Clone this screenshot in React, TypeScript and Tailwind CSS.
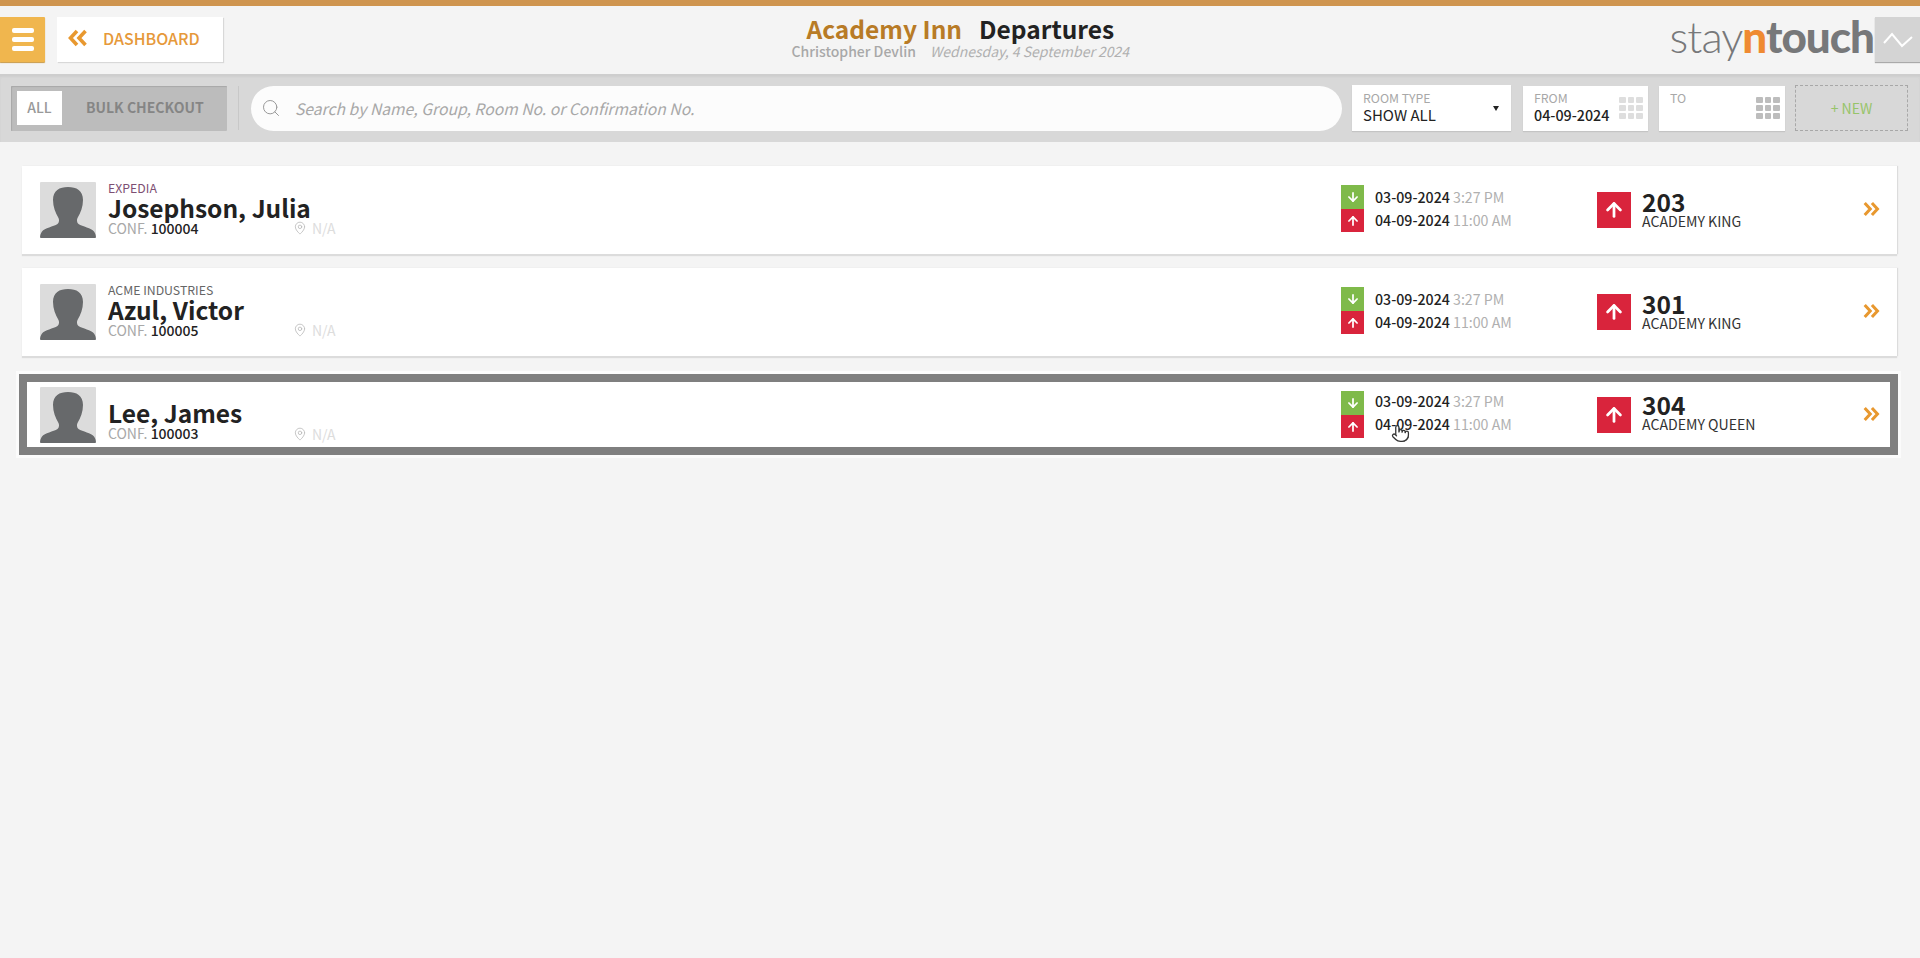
import { ArrowDown, ArrowUp, MapPin, Pointer, Search } from "lucide-react"

const guests = [
  { group: "EXPEDIA", groupColor: "text-[#7d4f73]", name: "Josephson, Julia", conf: "100004", room: "203", roomType: "ACADEMY KING" },
  { group: "ACME INDUSTRIES", groupColor: "text-[#666666]", name: "Azul, Victor", conf: "100005", room: "301", roomType: "ACADEMY KING" },
  { group: "", groupColor: "", name: "Lee, James", conf: "100003", room: "304", roomType: "ACADEMY QUEEN", active: true },
]

function DoubleChevron({ className }: { className: string }) {
  return (
    <svg viewBox="0 0 20 18" className={className} fill="none" stroke="currentColor" strokeWidth="3.6">
      <path d="M2 2l6.5 7L2 16" />
      <path d="M10.5 2l6.5 7-6.5 7" />
    </svg>
  )
}

function Silhouette() {
  return (
    <div className="w-14 h-14 bg-[#dcdcdc] shrink-0 overflow-hidden rounded-[1px]">
      <svg viewBox="0 0 56 56" className="w-14 h-14" fill="#67696b">
        <path d="M28 5c8.500 0 15 3.500 15 13 0 7-2.500 13-5.500 18-1 2-.5 5 1 6 4 2.500 13 4 15.500 7.500 1.500 2 2 4 2 7H0c0-3 .5-5 2-7 2.500-3.500 11.500-5 15.500-7.500 1.500-1 2-4 1-6-3-5-5.500-11-5.500-18C13 8.500 19.500 5 28 5z" />
      </svg>
    </div>
  )
}

function CalendarGrid({ className }: { className: string }) {
  return (
    <div className="grid grid-cols-3 gap-[2px] w-[24px]">
      {Array.from({ length: 9 }).map((_, i) => (
        <span key={i} className={`h-[6px] rounded-[1px] ${className}`} />
      ))}
    </div>
  )
}

function GuestRow({ guest }: { guest: (typeof guests)[number] }) {
  return (
    <div
      className={
        guest.active
          ? "h-[81px] -ml-[3px] -mr-[1px] mt-[18px] border-[8px] border-[#7f7f7f] bg-white flex items-center pl-[13px] pr-[10px] shadow-[0_0_0_3px_#fbfbfb]"
          : "h-[88px] mb-[14px] bg-white flex items-center pl-[18px] pr-[17px] shadow-[0_2px_1px_#dcdcdc,1px_0_1px_#dcdcdc]"
      }
    >
      <Silhouette />
      <div className={`ml-3 w-[185px] shrink-0 ${guest.active ? "pt-[11px]" : "pb-[5px]"}`}>
        {guest.group && <div className={`text-[12.300px] leading-[14px] ${guest.groupColor}`}>{guest.group}</div>}
        <div className="text-[24.500px] leading-[26px] font-semibold text-[#222222] whitespace-nowrap">{guest.name}</div>
        <div className="text-[14px] leading-[14px] text-[#a8a8a8] whitespace-nowrap">
          CONF. <span className="font-medium text-[#222222]">{guest.conf}</span>
        </div>
      </div>
      <div className={`flex items-center text-[#c4c4c4] self-end ${guest.active ? "mb-[6px]" : "mb-[19px]"}`}>
        <MapPin size={14} strokeWidth={1.3} className="text-[#b5b5b5]" />
        <span className="ml-[5px] text-[14px] leading-[14px] text-[#dddddd]">N/A</span>
      </div>
      <div className="flex-1" />
      <div className="w-[256px] flex items-center">
        <div className={`flex flex-col w-[23px] ${guest.active ? "" : "-mt-[3px]"}`}>
          <div className="h-[24px] bg-[#7fba4a] flex items-center justify-center">
            <ArrowDown size={14} strokeWidth={3} className="text-white" />
          </div>
          <div className="h-[23px] bg-[#d9243c] flex items-center justify-center">
            <ArrowUp size={14} strokeWidth={3} className="text-white" />
          </div>
        </div>
        <div className={`ml-[11px] text-[14.200px] leading-[23px] whitespace-nowrap ${guest.active ? "-mt-[3px]" : "-mt-[2px]"}`}>
          <div>
            <span className="font-medium text-[#222222]">03-09-2024</span>{" "}
            <span className="text-[#b0b0b0]">3:27 PM</span>
          </div>
          <div>
            <span className="font-medium text-[#222222]">04-09-2024</span>{" "}
            <span className="text-[#b0b0b0]">11:00 AM</span>
          </div>
        </div>
      </div>
      <div className="w-[34px] h-[36px] bg-[#d9243c] flex items-center justify-center shrink-0">
        <ArrowUp size={22} strokeWidth={3} className="text-white" />
      </div>
      <div className={`ml-[11px] w-[221px] ${guest.active ? "-mt-[5px]" : "-mt-[3px]"}`}>
        <div className="text-[24.500px] leading-[25px] font-semibold text-[#222222]">{guest.room}</div>
        <div className="text-[14.100px] leading-[15px] text-[#333333] whitespace-nowrap">{guest.roomType}</div>
      </div>
      <DoubleChevron className="w-[17px] h-[16px] -mt-[2px] text-[#e8982f]" />
    </div>
  )
}

export default function App() {
  return (
    <div className="relative min-h-[958px] bg-[#f4f4f4] font-['Noto_Sans_CJK_SC',sans-serif] overflow-hidden">
      <div className="h-[6px] bg-[#cf954f]" />

      {/* header */}
      <div className="h-[68px] flex items-start pt-[11px] relative">
        <div className="w-[45px] h-[45px] bg-[#f0b64e] rounded-r-[1px] flex flex-col items-center justify-center gap-[4px] shadow-[0_1px_1px_#c99a45]">
          <span className="w-[22px] h-[5px] rounded-[2px] bg-white" />
          <span className="w-[22px] h-[5px] rounded-[2px] bg-white" />
          <span className="w-[22px] h-[5px] rounded-[2px] bg-white" />
        </div>
        <div className="ml-3 w-[166px] h-[45px] bg-white flex items-center pl-[10px] pb-[3px] shadow-[1px_1px_1px_#d8d8d8]">
          <div className="rotate-180">
            <DoubleChevron className="w-[21px] h-[18px] text-[#e8982f]" />
          </div>
          <span className="ml-[15px] text-[16px] font-medium text-[#e6993a]">DASHBOARD</span>
        </div>
        <div className="flex-1 flex flex-col items-center -mt-[3px] pl-[28px]">
          <div className="text-[24.500px] leading-[30px] font-semibold whitespace-nowrap">
            <span className="text-[#b87b26]">Academy Inn</span>
            <span className="ml-[17px] text-[#222222]">Departures</span>
          </div>
          <div className="text-[14px] leading-[18px] whitespace-nowrap -mt-[2px]">
            <span className="font-medium text-[#a8a8a8]">Christopher Devlin</span>
            <span className="ml-[14px] italic text-[#b0b0b0]">Wednesday, 4 September 2024</span>
          </div>
        </div>
        <div className="flex items-start">
          <div className="text-[44px] leading-[44px] font-['Lato',sans-serif] tracking-[-1px] whitespace-nowrap text-[#77787a] -mt-[3px]">
            <span className="font-light">stay</span>
            <span className="font-black text-[#ef8a32]">n</span>
            <span className="font-black">touch</span>
          </div>
          <div className="w-[45px] h-[45px] ml-[1px] bg-[#d4d4d4] flex items-center justify-center shadow-[0_1px_1px_#aaaaaa]">
            <svg viewBox="0 0 30 18" className="w-[30px] h-[18px]" fill="none" stroke="white" strokeWidth="2">
              <path d="M1 12l8-9 10 12 10-9" />
            </svg>
          </div>
        </div>
      </div>

      {/* filter bar */}
      <div className="h-[68px] bg-[#d8d8d8] shadow-[inset_0_3px_2px_#cecece] flex items-center pl-[11px] pr-[12px]">
        <div className="w-[216px] h-[45px] bg-[#bcbcbc] flex items-center pl-[6px] shrink-0 rounded-[1px] shadow-[inset_1px_1px_1px_#a8a8a8]">
          <div className="w-[45px] h-[34px] bg-white flex items-center justify-center pb-[2px] text-[14px] font-medium text-[#999999]">ALL</div>
          <div className="ml-[24px] pb-[2px] text-[14px] font-semibold text-[#858585] whitespace-nowrap">BULK CHECKOUT</div>
        </div>
        <div className="w-px h-[44px] bg-[#c8c8c8] ml-[11px]" />
        <div className="ml-[12px] w-[1091px] h-[45px] rounded-full bg-[#fcfcfc] flex items-center pl-[10px] shrink-0">
          <Search size={20} strokeWidth={1.2} className="text-[#999999]" />
          <span className="ml-[14px] mt-[1px] text-[15.700px] italic text-[#a8a8a8] whitespace-nowrap">
            Search by Name, Group, Room No. or Confirmation No.
          </span>
        </div>
        <div className="ml-[10px] w-[159px] h-[46px] bg-white flex items-center justify-between pl-[11px] pr-[12px] shrink-0 shadow-[0_1px_1px_#c4c4c4]">
          <div className="-mt-[1px]">
            <div className="text-[12.300px] leading-[15px] text-[#a8a8a8]">ROOM TYPE</div>
            <div className="text-[15px] leading-[18px] text-[#222222]">SHOW ALL</div>
          </div>
          <span className="w-0 h-0 border-x-[3px] border-x-transparent border-t-[5px] border-t-[#222222]" />
        </div>
        <div className="ml-[12px] w-[125px] h-[45px] bg-white flex items-center justify-between pl-[11px] pr-[5px] shrink-0 shadow-[0_1px_1px_#c4c4c4]">
          <div className="-mt-[1px]">
            <div className="text-[12.300px] leading-[15px] text-[#a8a8a8]">FROM</div>
            <div className="text-[14.300px] leading-[18px] font-medium text-[#222222]">04-09-2024</div>
          </div>
          <CalendarGrid className="bg-[#dedede]" />
        </div>
        <div className="ml-[11px] w-[126px] h-[45px] bg-white flex items-center justify-between pl-[11px] pr-[5px] shrink-0 shadow-[0_1px_1px_#c4c4c4]">
          <div className="self-start pt-[5px] text-[12.300px] leading-[15px] text-[#a8a8a8]">TO</div>
          <CalendarGrid className="bg-[#bdbdbd]" />
        </div>
        <div className="ml-[10px] w-[113px] h-[46px] border border-dashed border-[#a8a8a8] flex items-center justify-center text-[14px] text-[#97c46a] shrink-0">
          + NEW
        </div>
      </div>

      {/* guest list */}
      <div className="pt-[24px] pl-[22px] pr-[23px]">
        {guests.map((guest) => (
          <GuestRow key={guest.conf} guest={guest} />
        ))}
      </div>

      {/* mouse pointer from the recording */}
      <Pointer size={19} strokeWidth={1.6} className="absolute left-[1391px] top-[424px] text-[#333333] fill-white" />
    </div>
  )
}
